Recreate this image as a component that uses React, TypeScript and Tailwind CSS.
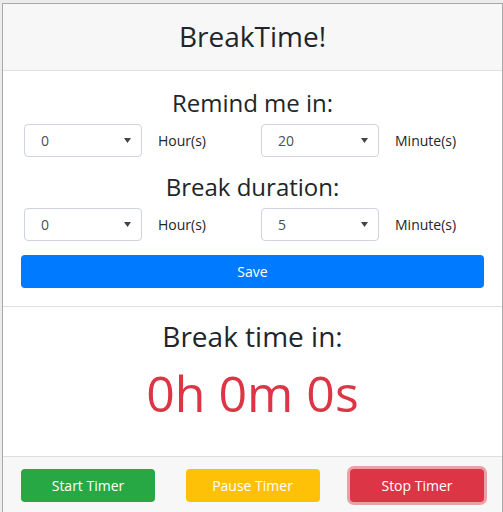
const Select = ({ value }: { value: string }) => (
  <div className="flex items-center justify-between w-[118px] h-[33px] pl-4 pr-[10px] border border-[#ced4da] rounded bg-white text-sm text-[#495057]">
    <span>{value}</span>
    <svg width="7" height="5" viewBox="0 0 7 5">
      <path d="M0 0 L7 0 L3.5 5 Z" fill="#444" />
    </svg>
  </div>
);

const TimeRow = ({ hours, minutes }: { hours: string; minutes: string }) => (
  <div className="flex pl-[3px]">
    <div className="flex items-center gap-4 w-[237px]">
      <Select value={hours} />
      <span className="text-sm text-[#212529]">Hour(s)</span>
    </div>
    <div className="flex items-center gap-4">
      <Select value={minutes} />
      <span className="text-sm text-[#212529]">Minute(s)</span>
    </div>
  </div>
);

export default function App() {
  return (
    <div
      className="w-[503px] h-[512px] overflow-hidden bg-[#ececec] pl-[2px] pt-[3px]"
      style={{ fontFamily: '"Open Sans", "Noto Sans", sans-serif' }}
    >
      <div className="w-[501px] h-[520px] border border-[#a9a9a9] bg-white flex flex-col">
        {/* header */}
        <div className="h-[67px] bg-[#f7f7f7] border-b border-[#dfdfdf] flex items-center justify-center">
          <h3 className="text-[28px] leading-[1.2] text-[#212529]">BreakTime!</h3>
        </div>

        {/* settings */}
        <div className="px-[18px] pt-[17px] pb-[18px] border-b border-[#dfdfdf]">
          <h4 className="text-2xl leading-[29px] text-center text-[#212529]">Remind me in:</h4>
          <div className="mt-[7px]">
            <TimeRow hours="0" minutes="20" />
          </div>
          <h4 className="mt-[15px] text-2xl leading-[29px] text-center text-[#212529]">Break duration:</h4>
          <div className="mt-[7px]">
            <TimeRow hours="0" minutes="5" />
          </div>
          <button className="mt-[14px] w-full h-[33px] rounded bg-[#007bff] text-white text-sm">
            Save
          </button>
        </div>

        {/* countdown */}
        <div className="h-[150px] border-b border-[#dfdfdf] flex flex-col items-center pt-[12px]">
          <h3 className="text-[28px] leading-[34px] text-[#212529]">Break time in:</h3>
          <div className="mt-[10px] text-[50px] leading-[60px] text-[#dc3545]">0h 0m 0s</div>
        </div>

        {/* footer */}
        <div className="flex-1 bg-[#f7f7f7] px-[18px] pt-[12px] flex justify-between">
          <button className="w-[134px] h-[33px] rounded bg-[#28a745] text-white text-sm">
            Start Timer
          </button>
          <button className="w-[134px] h-[33px] rounded bg-[#ffc107] text-white text-sm">
            Pause Timer
          </button>
          <button className="w-[134px] h-[33px] rounded bg-[#dc3545] text-white text-sm ring-[3px] ring-[#dc3545]/45">
            Stop Timer
          </button>
        </div>
      </div>
    </div>
  );
}
